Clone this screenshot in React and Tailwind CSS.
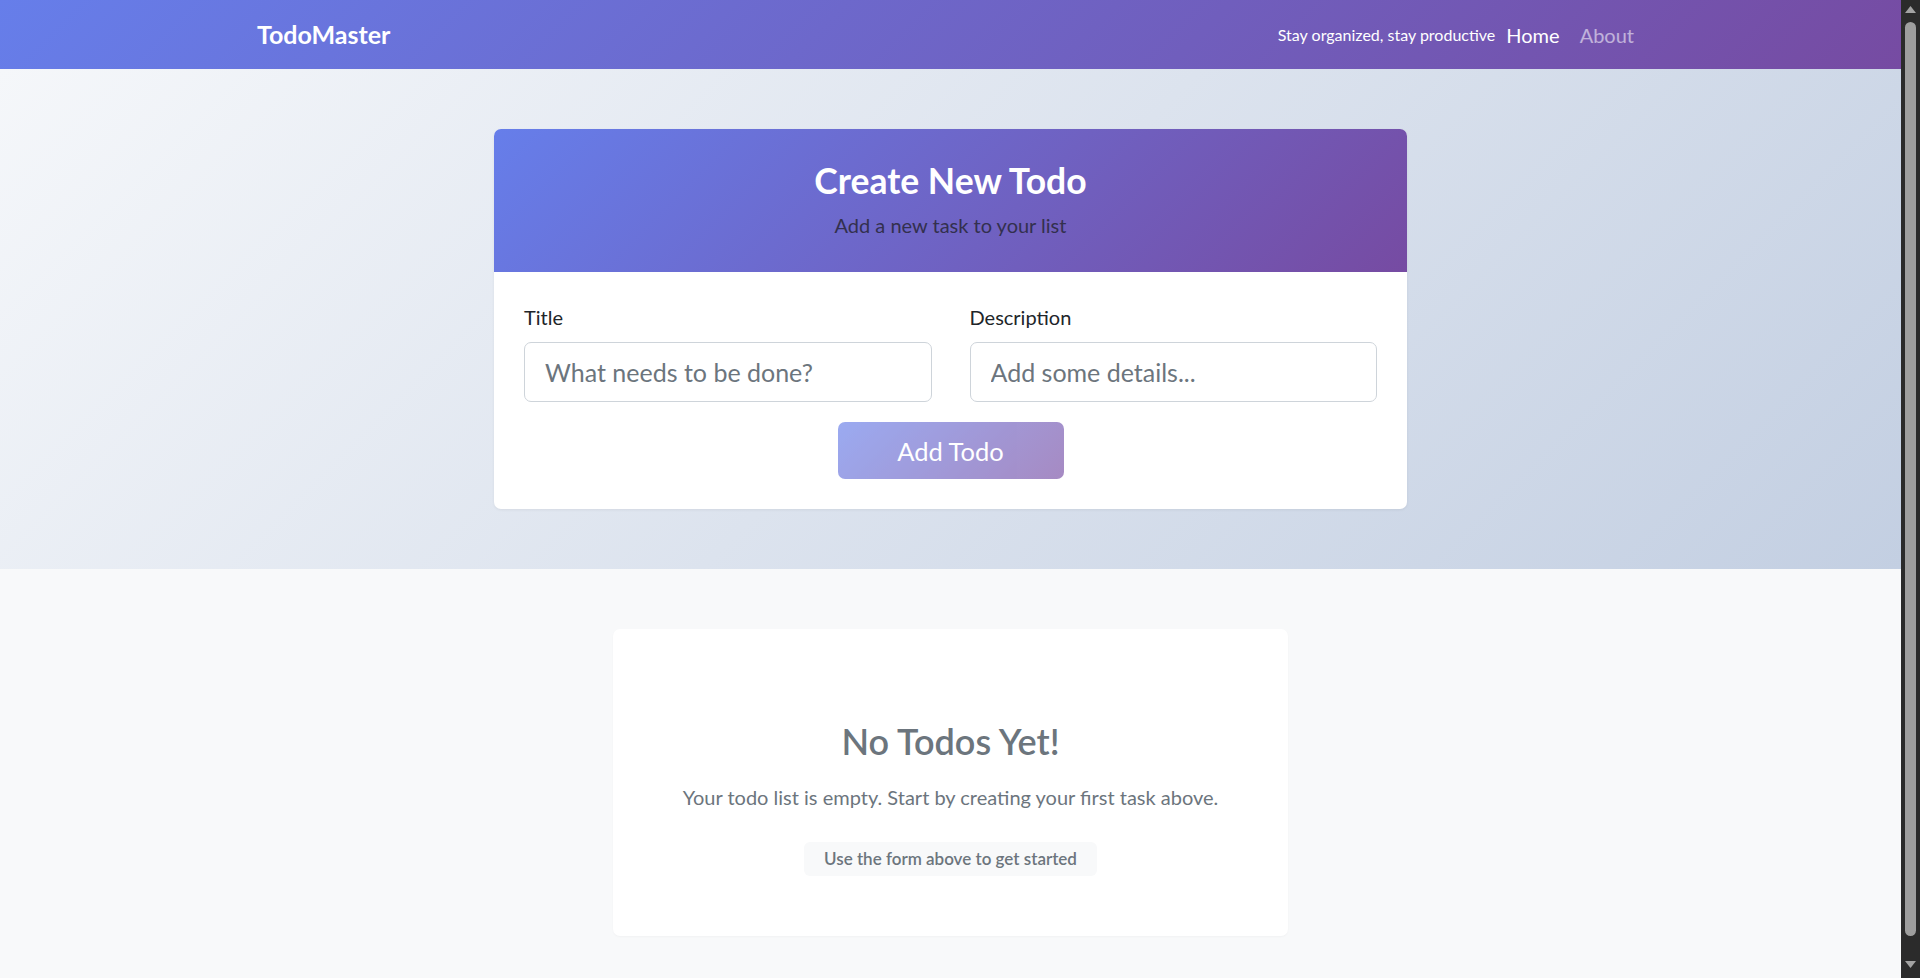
import React, { useState } from "react";

function Navbar() {
  return (
    <nav className="h-[69px] bg-[linear-gradient(135deg,#667eea_0%,#764ba2_100%)]">
      <div className="mx-auto flex h-full max-w-[1387px] items-center justify-between">
        <span className="text-[25px] font-bold text-white">TodoMaster</span>
        <div className="flex items-center">
          <span className="mr-px pt-px text-[16px] text-white">Stay organized, stay productive</span>
          <a href="#" className="px-[10px] text-[20px] text-white">
            Home
          </a>
          <a href="#" className="px-[10px] text-[20px] text-white/55">
            About
          </a>
        </div>
      </div>
    </nav>
  );
}

function TodoForm() {
  const [titulo, setTitulo] = useState("");
  const [descripcion, setDescripcion] = useState("");

  return (
    <section className="bg-[linear-gradient(135deg,#f5f7fa_0%,#c3cfe2_100%)] py-[60px]">
      <div className="mx-auto w-[913px] overflow-hidden rounded-[7px] bg-white shadow-[0_1px_3px_rgba(0,0,0,0.06)]">
        {/* cabecera */}
        <div className="bg-[linear-gradient(135deg,#667eea_0%,#764ba2_100%)] px-[30px] pt-[31px] pb-[32px] text-center">
          <h3 className="mb-[8px] text-[35.5px] font-bold leading-[42px] text-white">Create New Todo</h3>
          <p className="text-[20px] leading-[30px] text-[#33304e]">Add a new task to your list</p>
        </div>

        {/* formulario */}
        <form className="p-[30px]" onSubmit={(e) => e.preventDefault()}>
          <div className="grid grid-cols-2 gap-x-[38px]">
            <div>
              <label className="mb-[10px] block text-[20px] leading-[30px] text-[#212529]">Title</label>
              <input
                type="text"
                value={titulo}
                onChange={(e) => setTitulo(e.target.value)}
                placeholder="What needs to be done?"
                className="h-[60px] w-full rounded-[7px] border border-[#ced4da] px-[20px] text-[25px] text-[#212529] outline-none placeholder:text-[#6c757d]"
              />
            </div>
            <div>
              <label className="mb-[10px] block text-[20px] leading-[30px] text-[#212529]">Description</label>
              <input
                type="text"
                value={descripcion}
                onChange={(e) => setDescripcion(e.target.value)}
                placeholder="Add some details..."
                className="h-[60px] w-full rounded-[7px] border border-[#ced4da] px-[20px] text-[25px] text-[#212529] outline-none placeholder:text-[#6c757d]"
              />
            </div>
          </div>
          <div className="mt-[20px] flex justify-center">
            <button
              type="submit"
              disabled={!titulo.trim()}
              className="h-[57px] w-[226px] rounded-[7px] bg-[linear-gradient(135deg,#667eea_0%,#764ba2_100%)] pt-px text-[25.5px] text-white opacity-65"
            >
              Add Todo
            </button>
          </div>
        </form>
      </div>
    </section>
  );
}

function EmptyState() {
  return (
    <section className="bg-[#f8f9fa] py-[60px]">
      <div className="mx-auto w-[675px] rounded-[7px] bg-white pt-[91px] pb-[60px] text-center shadow-[0_1px_2px_rgba(0,0,0,0.03)]">
        <h3 className="mb-[20px] text-[36px] font-semibold leading-[42px] text-[#6c757d]">No Todos Yet!</h3>
        <p className="mb-[30px] text-[20px] leading-[30px] text-[#6c757d]">
          Your todo list is empty. Start by creating your first task above.
        </p>
        <span className="inline-block h-[34px] rounded-[6px] bg-[#f8f9fa] px-[20px] text-[17px] font-semibold leading-[34px] text-[#6c757d]">
          Use the form above to get started
        </span>
      </div>
    </section>
  );
}

// barra de desplazamiento de la ventana
function Scrollbar() {
  return (
    <div className="sticky top-0 flex h-screen w-[19px] shrink-0 flex-col items-center bg-[#2b2b2b]">
      <svg className="mt-[6px]" width="11" height="7" viewBox="0 0 11 7">
        <path d="M5.5 0 L11 7 L0 7 Z" fill="#a3a3a3" />
      </svg>
      <div className="mt-[9px] h-[914px] w-[11px] rounded-full bg-[#9e9e9e]" />
      <div className="flex-1" />
      <svg className="mb-[10px]" width="11" height="7" viewBox="0 0 11 7">
        <path d="M0 0 L11 0 L5.5 7 Z" fill="#a3a3a3" />
      </svg>
    </div>
  );
}

export default function App() {
  return (
    <div className="flex min-h-screen font-['Lato',sans-serif]">
      <div className="min-w-0 flex-1">
        <Navbar />
        <TodoForm />
        <EmptyState />
      </div>
      <Scrollbar />
    </div>
  );
}
